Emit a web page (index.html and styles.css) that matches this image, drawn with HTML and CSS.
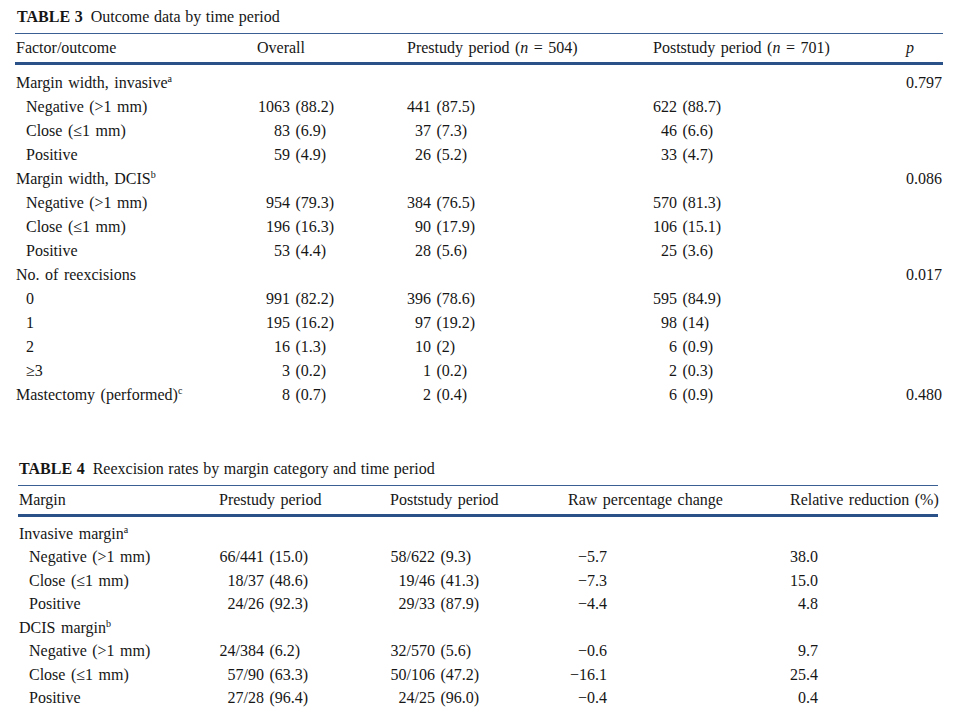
FILE: index.html
```html
<!DOCTYPE html>
<html>
<head>
<meta charset="utf-8">
<link rel="stylesheet" href="styles.css">
</head>
<body>
<section class="table t3">
  <div class="caption"><b>TABLE 3</b><span class="ctext">Outcome data by time period</span></div>
  <div class="head row">
    <div class="c1">Factor/outcome</div>
    <div>Overall</div>
    <div>Prestudy period (<i>n</i> = 504)</div>
    <div>Poststudy period (<i>n</i> = 701)</div>
    <div class="c5"><i>p</i></div>
  </div>
  <div class="body">
    <div class="row"><div class="c1">Margin width, invasive<sup>a</sup></div><div></div><div></div><div></div><div class="c5">0.797</div></div>
    <div class="row"><div class="c1 sub">Negative (&gt;1 mm)</div><div class="a"><span class="n">1063</span> (88.2)</div><div class="b"><span class="n">441</span> (87.5)</div><div class="b"><span class="n">622</span> (88.7)</div><div class="c5"></div></div>
    <div class="row"><div class="c1 sub">Close (≤1 mm)</div><div class="a"><span class="n">83</span> (6.9)</div><div class="b"><span class="n">37</span> (7.3)</div><div class="b"><span class="n">46</span> (6.6)</div><div class="c5"></div></div>
    <div class="row"><div class="c1 sub">Positive</div><div class="a"><span class="n">59</span> (4.9)</div><div class="b"><span class="n">26</span> (5.2)</div><div class="b"><span class="n">33</span> (4.7)</div><div class="c5"></div></div>
    <div class="row"><div class="c1">Margin width, DCIS<sup>b</sup></div><div></div><div></div><div></div><div class="c5">0.086</div></div>
    <div class="row"><div class="c1 sub">Negative (&gt;1 mm)</div><div class="a"><span class="n">954</span> (79.3)</div><div class="b"><span class="n">384</span> (76.5)</div><div class="b"><span class="n">570</span> (81.3)</div><div class="c5"></div></div>
    <div class="row"><div class="c1 sub">Close (≤1 mm)</div><div class="a"><span class="n">196</span> (16.3)</div><div class="b"><span class="n">90</span> (17.9)</div><div class="b"><span class="n">106</span> (15.1)</div><div class="c5"></div></div>
    <div class="row"><div class="c1 sub">Positive</div><div class="a"><span class="n">53</span> (4.4)</div><div class="b"><span class="n">28</span> (5.6)</div><div class="b"><span class="n">25</span> (3.6)</div><div class="c5"></div></div>
    <div class="row"><div class="c1">No. of reexcisions</div><div></div><div></div><div></div><div class="c5">0.017</div></div>
    <div class="row"><div class="c1 sub">0</div><div class="a"><span class="n">991</span> (82.2)</div><div class="b"><span class="n">396</span> (78.6)</div><div class="b"><span class="n">595</span> (84.9)</div><div class="c5"></div></div>
    <div class="row"><div class="c1 sub">1</div><div class="a"><span class="n">195</span> (16.2)</div><div class="b"><span class="n">97</span> (19.2)</div><div class="b"><span class="n">98</span> (14)</div><div class="c5"></div></div>
    <div class="row"><div class="c1 sub">2</div><div class="a"><span class="n">16</span> (1.3)</div><div class="b"><span class="n">10</span> (2)</div><div class="b"><span class="n">6</span> (0.9)</div><div class="c5"></div></div>
    <div class="row"><div class="c1 sub">≥3</div><div class="a"><span class="n">3</span> (0.2)</div><div class="b"><span class="n">1</span> (0.2)</div><div class="b"><span class="n">2</span> (0.3)</div><div class="c5"></div></div>
    <div class="row"><div class="c1">Mastectomy (performed)<sup>c</sup></div><div class="a"><span class="n">8</span> (0.7)</div><div class="b"><span class="n">2</span> (0.4)</div><div class="b"><span class="n">6</span> (0.9)</div><div class="c5">0.480</div></div>
  </div>
</section>

<section class="table t4">
  <div class="caption"><b>TABLE 4</b><span class="ctext">Reexcision rates by margin category and time period</span></div>
  <div class="head row">
    <div class="c1">Margin</div>
    <div>Prestudy period</div>
    <div>Poststudy period</div>
    <div>Raw percentage change</div>
    <div>Relative reduction (%)</div>
  </div>
  <div class="body">
    <div class="row"><div class="c1">Invasive margin<sup>a</sup></div><div></div><div></div><div></div><div></div></div>
    <div class="row"><div class="c1 sub">Negative (&gt;1 mm)</div><div class="f"><span class="n">66/441</span> (15.0)</div><div class="f"><span class="n">58/622</span> (9.3)</div><div class="r"><span class="v">−5.7</span></div><div class="rr"><span class="v">38.0</span></div></div>
    <div class="row"><div class="c1 sub">Close (≤1 mm)</div><div class="f"><span class="n">18/37</span> (48.6)</div><div class="f"><span class="n">19/46</span> (41.3)</div><div class="r"><span class="v">−7.3</span></div><div class="rr"><span class="v">15.0</span></div></div>
    <div class="row"><div class="c1 sub">Positive</div><div class="f"><span class="n">24/26</span> (92.3)</div><div class="f"><span class="n">29/33</span> (87.9)</div><div class="r"><span class="v">−4.4</span></div><div class="rr"><span class="v">4.8</span></div></div>
    <div class="row"><div class="c1">DCIS margin<sup>b</sup></div><div></div><div></div><div></div><div></div></div>
    <div class="row"><div class="c1 sub">Negative (&gt;1 mm)</div><div class="f"><span class="n">24/384</span> (6.2)</div><div class="f"><span class="n">32/570</span> (5.6)</div><div class="r"><span class="v">−0.6</span></div><div class="rr"><span class="v">9.7</span></div></div>
    <div class="row"><div class="c1 sub">Close (≤1 mm)</div><div class="f"><span class="n">57/90</span> (63.3)</div><div class="f"><span class="n">50/106</span> (47.2)</div><div class="r"><span class="v">−16.1</span></div><div class="rr"><span class="v">25.4</span></div></div>
    <div class="row"><div class="c1 sub">Positive</div><div class="f"><span class="n">27/28</span> (96.4)</div><div class="f"><span class="n">24/25</span> (96.0)</div><div class="r"><span class="v">−0.4</span></div><div class="rr"><span class="v">0.4</span></div></div>
  </div>
</section>
</body>
</html>
```

FILE: styles.css
```css
html, body {
  margin: 0;
  padding: 0;
  background: #ffffff;
}

body {
  font-family: "Liberation Serif", "Times New Roman", serif;
  font-size: 16px;
  color: #161616;
  word-spacing: 1.5px;
}

.table {
  display: flex;
  flex-direction: column;
}

.caption {
  height: 20px;
  line-height: 20px;
  white-space: nowrap;
  margin-bottom: 6px;
  word-spacing: 0.6px;
}

.caption b {
  font-weight: bold;
}

.ctext {
  margin-left: 8px;
}

.head {
  border-top: 1px solid #3a5f93;
  border-bottom: 3px solid #2b5189;
  height: 28px;
  align-items: center;
}

.row {
  display: grid;
  white-space: nowrap;
}

.body .row {
  align-items: center;
}

.c1 {
  padding-left: 1px;
}

.sub {
  padding-left: 11px;
}

sup {
  font-size: 10px;
  line-height: 0;
  vertical-align: 6px;
}

.n {
  display: inline-block;
  text-align: right;
}

/* ---- Table 3 ---- */
.t3 {
  width: 928px;
  margin: 7px 0 0 15px;
}

.t3 .caption {
  padding-left: 2px;
}

.t3 .row {
  grid-template-columns: 242px 150px 246px 252px 38px;
}

.t3 .body {
  padding-top: 6px;
}

.t3 .body .row {
  height: 24px;
}

.t3 .a .n {
  width: 33px;
}

.t3 .b .n {
  width: 24px;
}

.t3 .c5 {
  padding-left: 1px;
}

/* ---- Table 4 ---- */
.t4 {
  width: 920px;
  margin: 52px 0 0 18px;
}

.t4 .caption {
  padding-left: 1px;
}

.t4 .row {
  grid-template-columns: 201px 171px 178px 222px 148px;
}

.t4 .body {
  padding-top: 5px;
}

.t4 .body .row {
  height: 23.5px;
}

.t4 .f .n {
  width: 45px;
}

.v {
  display: inline-block;
  text-align: right;
}

.t4 .r .v {
  width: 39px;
}

.t4 .rr .v {
  width: 28px;
}
```
